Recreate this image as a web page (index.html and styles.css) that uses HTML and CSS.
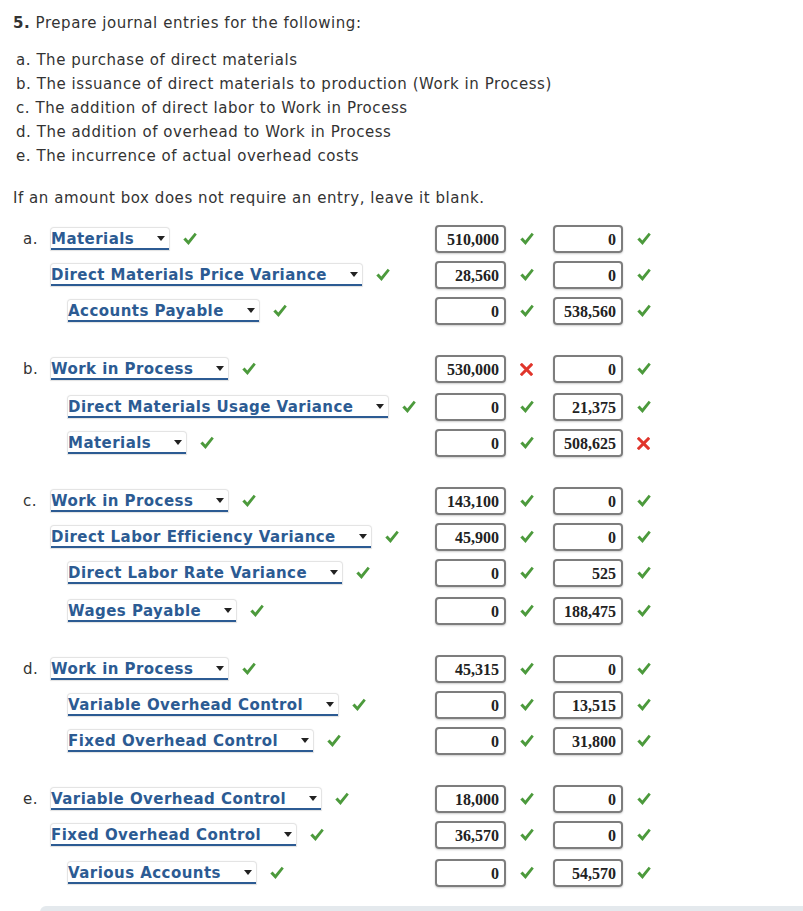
FILE: index.html
```html
<!DOCTYPE html>
<html>
<head>
<meta charset="utf-8">
<link rel="stylesheet" href="styles.css">
</head>
<body>
<div class="page">
  <p class="question"><b>5.</b> Prepare journal entries for the following:</p>
  <ul class="tasks">
    <li>a. The purchase of direct materials</li>
    <li>b. The issuance of direct materials to production (Work in Process)</li>
    <li>c. The addition of direct labor to Work in Process</li>
    <li>d. The addition of overhead to Work in Process</li>
    <li>e. The incurrence of actual overhead costs</li>
  </ul>
  <p class="note">If an amount box does not require an entry, leave it blank.</p>

  <div class="entry">
    <div class="row">
      <span class="lbl">a.</span>
      <div class="acct"><span class="sel">Materials</span><span class="ok"></span></div>
      <div class="amt">510,000</div><span class="ok"></span>
      <div class="amt">0</div><span class="ok"></span>
    </div>
    <div class="row">
      <span class="lbl"></span>
      <div class="acct"><span class="sel">Direct Materials Price Variance</span><span class="ok"></span></div>
      <div class="amt">28,560</div><span class="ok"></span>
      <div class="amt">0</div><span class="ok"></span>
    </div>
    <div class="row">
      <span class="lbl"></span>
      <div class="acct cr"><span class="sel">Accounts Payable</span><span class="ok"></span></div>
      <div class="amt">0</div><span class="ok"></span>
      <div class="amt">538,560</div><span class="ok"></span>
    </div>
  </div>

  <div class="entry">
    <div class="row">
      <span class="lbl">b.</span>
      <div class="acct"><span class="sel">Work in Process</span><span class="ok"></span></div>
      <div class="amt">530,000</div><span class="bad"></span>
      <div class="amt">0</div><span class="ok"></span>
    </div>
    <div class="row tall">
      <span class="lbl"></span>
      <div class="acct cr"><span class="sel">Direct Materials Usage Variance</span><span class="ok"></span></div>
      <div class="amt">0</div><span class="ok"></span>
      <div class="amt">21,375</div><span class="ok"></span>
    </div>
    <div class="row">
      <span class="lbl"></span>
      <div class="acct cr"><span class="sel">Materials</span><span class="ok"></span></div>
      <div class="amt">0</div><span class="ok"></span>
      <div class="amt">508,625</div><span class="bad"></span>
    </div>
  </div>

  <div class="entry">
    <div class="row">
      <span class="lbl">c.</span>
      <div class="acct"><span class="sel">Work in Process</span><span class="ok"></span></div>
      <div class="amt">143,100</div><span class="ok"></span>
      <div class="amt">0</div><span class="ok"></span>
    </div>
    <div class="row">
      <span class="lbl"></span>
      <div class="acct"><span class="sel">Direct Labor Efficiency Variance</span><span class="ok"></span></div>
      <div class="amt">45,900</div><span class="ok"></span>
      <div class="amt">0</div><span class="ok"></span>
    </div>
    <div class="row">
      <span class="lbl"></span>
      <div class="acct cr"><span class="sel">Direct Labor Rate Variance</span><span class="ok"></span></div>
      <div class="amt">0</div><span class="ok"></span>
      <div class="amt">525</div><span class="ok"></span>
    </div>
    <div class="row tall">
      <span class="lbl"></span>
      <div class="acct cr"><span class="sel">Wages Payable</span><span class="ok"></span></div>
      <div class="amt">0</div><span class="ok"></span>
      <div class="amt">188,475</div><span class="ok"></span>
    </div>
  </div>

  <div class="entry">
    <div class="row">
      <span class="lbl">d.</span>
      <div class="acct"><span class="sel">Work in Process</span><span class="ok"></span></div>
      <div class="amt">45,315</div><span class="ok"></span>
      <div class="amt">0</div><span class="ok"></span>
    </div>
    <div class="row">
      <span class="lbl"></span>
      <div class="acct cr"><span class="sel">Variable Overhead Control</span><span class="ok"></span></div>
      <div class="amt">0</div><span class="ok"></span>
      <div class="amt">13,515</div><span class="ok"></span>
    </div>
    <div class="row">
      <span class="lbl"></span>
      <div class="acct cr"><span class="sel">Fixed Overhead Control</span><span class="ok"></span></div>
      <div class="amt">0</div><span class="ok"></span>
      <div class="amt">31,800</div><span class="ok"></span>
    </div>
  </div>

  <div class="entry">
    <div class="row">
      <span class="lbl">e.</span>
      <div class="acct"><span class="sel">Variable Overhead Control</span><span class="ok"></span></div>
      <div class="amt">18,000</div><span class="ok"></span>
      <div class="amt">0</div><span class="ok"></span>
    </div>
    <div class="row">
      <span class="lbl"></span>
      <div class="acct"><span class="sel">Fixed Overhead Control</span><span class="ok"></span></div>
      <div class="amt">36,570</div><span class="ok"></span>
      <div class="amt">0</div><span class="ok"></span>
    </div>
    <div class="row tall">
      <span class="lbl"></span>
      <div class="acct cr"><span class="sel">Various Accounts</span><span class="ok"></span></div>
      <div class="amt">0</div><span class="ok"></span>
      <div class="amt">54,570</div><span class="ok"></span>
    </div>
  </div>
</div>
<div class="footer-bar"></div>
</body>
</html>
```

FILE: styles.css
```css
html, body {
  margin: 0;
  padding: 0;
  background: #fff;
}
body {
  font-family: "DejaVu Sans", Verdana, sans-serif;
  font-size: 15px;
  color: #333;
}
.page {
  padding: 11px 0 0 13px;
}
.question,
.tasks,
.note {
  letter-spacing: 0.55px;
}
.question {
  margin: 0;
  line-height: 24px;
}
.tasks {
  list-style: none;
  margin: 13px 0 0 0;
  padding: 0 0 0 3px;
}
.tasks li {
  line-height: 24px;
}
.note {
  margin: 18px 0 0 0;
  line-height: 24px;
}
.entry {
  margin-top: 22px;
}
.entry:first-of-type {
  margin-top: 11px;
}
.row {
  display: grid;
  grid-template-columns: 38px 384px 71px 47px 70px 30px;
  align-items: center;
  height: 36px;
}
.row.tall {
  margin-top: 2px;
}
.lbl {
  padding-left: 10px;
  line-height: 20px;
  letter-spacing: 0.55px;
}
.acct {
  display: flex;
  align-items: center;
}
.acct.cr {
  padding-left: 17px;
}
.sel {
  position: relative;
  display: inline-block;
  font-weight: bold;
  color: #2c5b93;
  letter-spacing: 0.45px;
  line-height: 18px;
  padding: 2px 35px 0 0;
  border-bottom: 2px solid #2c5b93;
  border-radius: 3px 3px 0 0;
  box-shadow: 0 0 1px 1px rgba(0, 0, 0, 0.12);
  background: #fff;
  white-space: nowrap;
}
.sel::after {
  content: "";
  position: absolute;
  right: 4px;
  top: 8px;
  border-left: 4px solid transparent;
  border-right: 4px solid transparent;
  border-top: 5px solid #222;
}
.acct .ok {
  margin-left: 14px;
}
.ok, .bad {
  display: inline-block;
  width: 14px;
  height: 14px;
  background-repeat: no-repeat;
  background-size: 14px 14px;
}
.row > .ok, .row > .bad {
  margin-left: 14px;
}
.ok {
  background-image: url("data:image/svg+xml;utf8,<svg xmlns='http://www.w3.org/2000/svg' viewBox='0 0 14 14'><polygon points='0.3,7.6 2.6,5.6 5.3,8.6 11.7,0.8 13.8,2.6 5.5,13' fill='%234c9a3c'/></svg>");
}
.bad {
  background-image: url("data:image/svg+xml;utf8,<svg xmlns='http://www.w3.org/2000/svg' viewBox='0 0 14 14'><path d='M2 2 L12 12 M12 2 L2 12' stroke='%23e0352b' stroke-width='3.2' stroke-linecap='square'/></svg>");
  width: 13px;
  height: 13px;
  background-size: 13px 13px;
}
.amt {
  box-sizing: border-box;
  height: 28px;
  border: 2px solid #7d7d7d;
  border-radius: 4px;
  box-shadow: 0 1px 2px rgba(0, 0, 0, 0.2);
  font-family: "Liberation Serif", "Times New Roman", serif;
  font-weight: bold;
  font-size: 16px;
  color: #222;
  text-align: right;
  line-height: 25px;
  padding-right: 5px;
}
.footer-bar {
  margin: 15px 0 0 40px;
  height: 10px;
  background: #e4e9ed;
  border-radius: 6px 0 0 0;
}
```
